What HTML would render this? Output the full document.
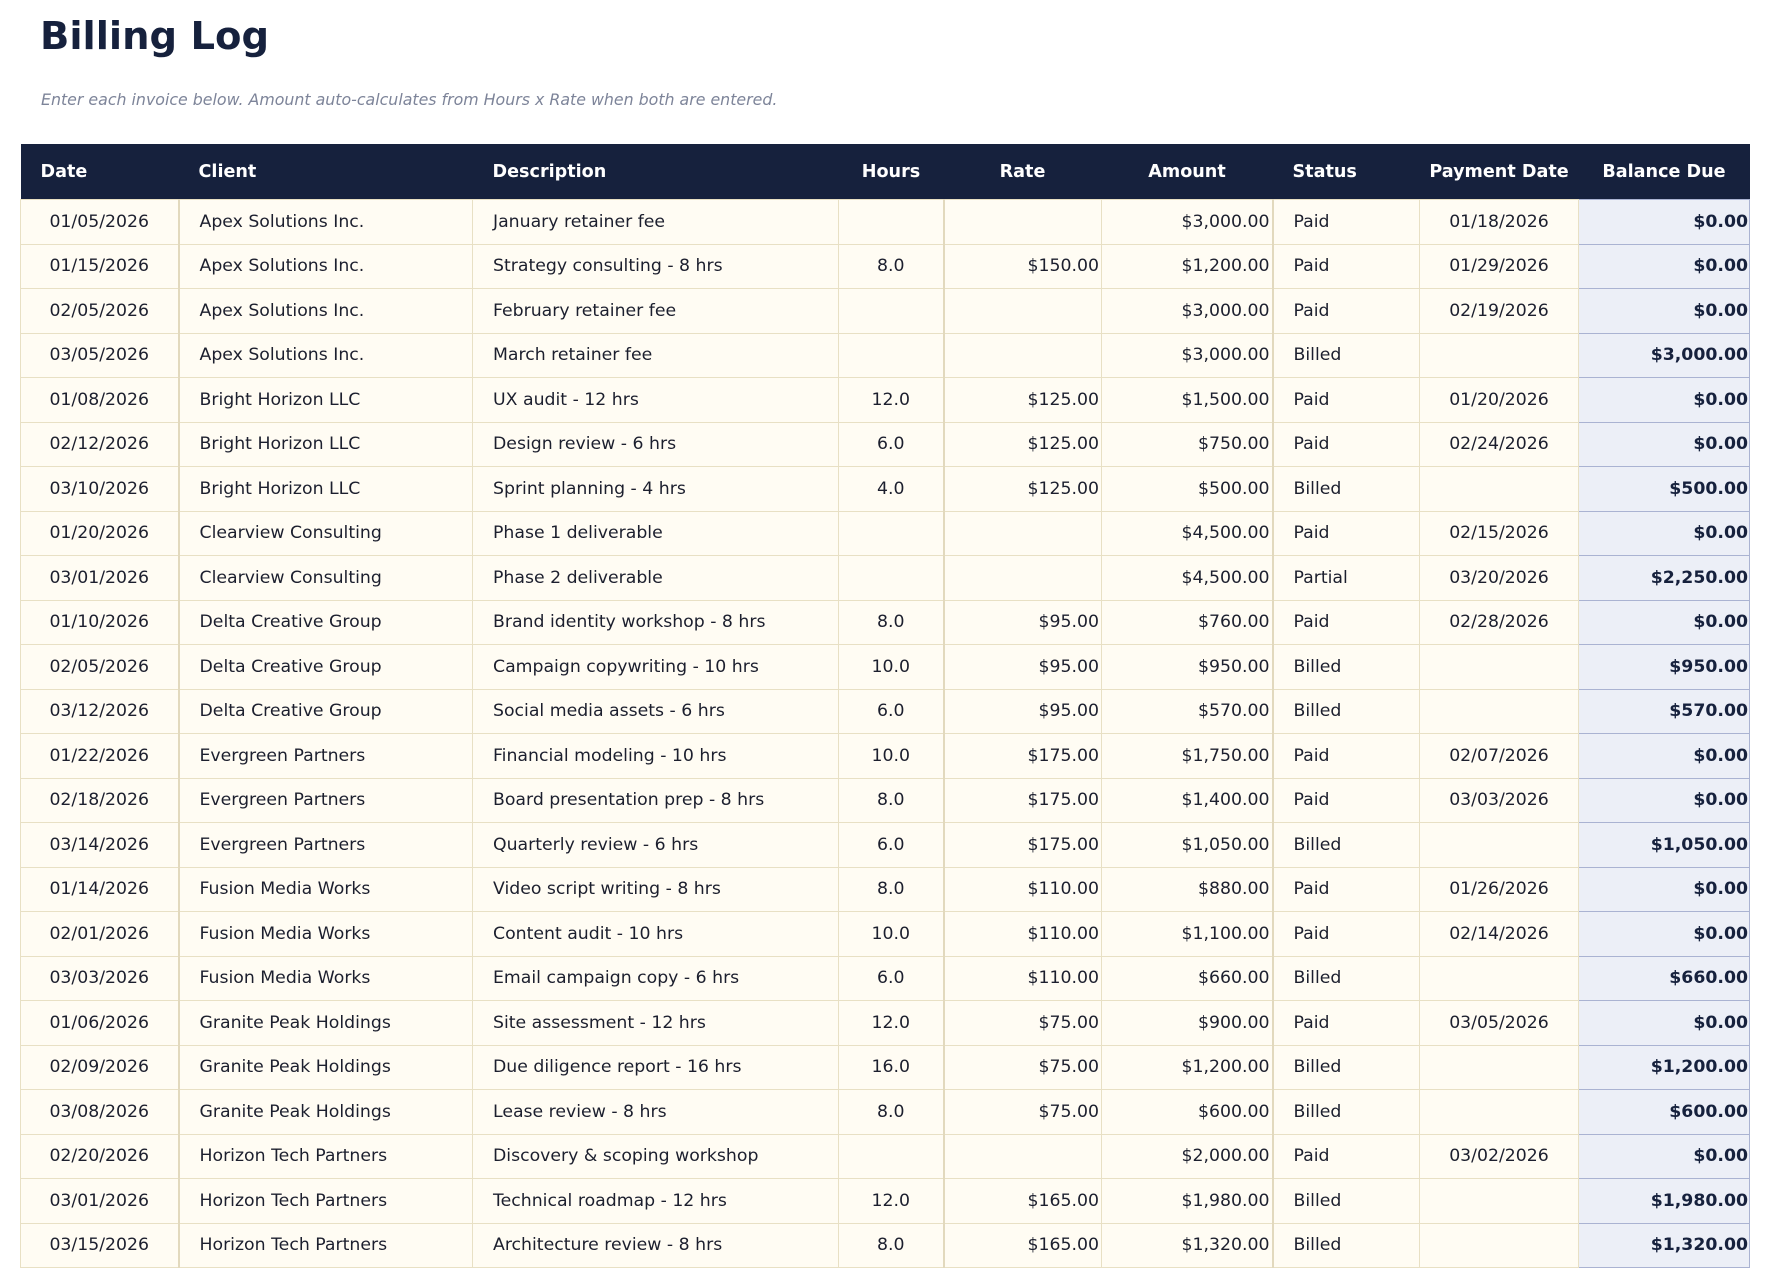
<!DOCTYPE html>
<html><head><meta charset="utf-8"><style>
html,body{margin:0;padding:0;background:#fff;width:1770px;height:1288px;overflow:hidden;font-family:"DejaVu Sans","Liberation Sans",sans-serif;}
h1{position:absolute;left:40px;top:14px;margin:0;font-size:38.5px;font-weight:bold;color:#16213d;}
.sub{position:absolute;left:41px;top:90px;font-size:15.8px;font-style:italic;color:#7d8499;}
table{position:absolute;left:20px;top:144px;border-collapse:collapse;table-layout:fixed;width:1729px;}
th{background:#16213d;color:#fff;font-weight:bold;font-size:17.6px;height:55px;padding:0;text-align:center;}
td{background:#fffcf3;border:1px solid #e8e0c4;height:43.5px;padding:0;font-size:17.3px;color:#1c1f2e;white-space:nowrap;}
.l{text-align:left;padding-left:20px;}
.c{text-align:center;}
.r{text-align:right;padding-right:2px;}
td.b{background:#eceff7;border:1px solid #aab3d2;font-weight:bold;text-align:right;padding-right:1px;color:#16213d;}
td.k{border-right:2px solid #e2d9bd;}
</style></head><body>
<h1>Billing Log</h1>
<div class="sub">Enter each invoice below. Amount auto-calculates from Hours x Rate when both are entered.</div>
<table>
<colgroup><col style="width:158px"><col style="width:294px"><col style="width:366px"><col style="width:105px"><col style="width:158px"><col style="width:171px"><col style="width:147px"><col style="width:159px"><col style="width:171px"></colgroup>
<tr><th class="l">Date</th><th class="l">Client</th><th class="l">Description</th><th>Hours</th><th>Rate</th><th>Amount</th><th class="l">Status</th><th>Payment Date</th><th>Balance Due</th></tr>
<tr><td class="c k">01/05/2026</td><td class="l">Apex Solutions Inc.</td><td class="l">January retainer fee</td><td class="c k"></td><td class="r"></td><td class="r k">$3,000.00</td><td class="l">Paid</td><td class="c">01/18/2026</td><td class="b">$0.00</td></tr>
<tr><td class="c k">01/15/2026</td><td class="l">Apex Solutions Inc.</td><td class="l">Strategy consulting - 8 hrs</td><td class="c k">8.0</td><td class="r">$150.00</td><td class="r k">$1,200.00</td><td class="l">Paid</td><td class="c">01/29/2026</td><td class="b">$0.00</td></tr>
<tr><td class="c k">02/05/2026</td><td class="l">Apex Solutions Inc.</td><td class="l">February retainer fee</td><td class="c k"></td><td class="r"></td><td class="r k">$3,000.00</td><td class="l">Paid</td><td class="c">02/19/2026</td><td class="b">$0.00</td></tr>
<tr><td class="c k">03/05/2026</td><td class="l">Apex Solutions Inc.</td><td class="l">March retainer fee</td><td class="c k"></td><td class="r"></td><td class="r k">$3,000.00</td><td class="l">Billed</td><td class="c"></td><td class="b">$3,000.00</td></tr>
<tr><td class="c k">01/08/2026</td><td class="l">Bright Horizon LLC</td><td class="l">UX audit - 12 hrs</td><td class="c k">12.0</td><td class="r">$125.00</td><td class="r k">$1,500.00</td><td class="l">Paid</td><td class="c">01/20/2026</td><td class="b">$0.00</td></tr>
<tr><td class="c k">02/12/2026</td><td class="l">Bright Horizon LLC</td><td class="l">Design review - 6 hrs</td><td class="c k">6.0</td><td class="r">$125.00</td><td class="r k">$750.00</td><td class="l">Paid</td><td class="c">02/24/2026</td><td class="b">$0.00</td></tr>
<tr><td class="c k">03/10/2026</td><td class="l">Bright Horizon LLC</td><td class="l">Sprint planning - 4 hrs</td><td class="c k">4.0</td><td class="r">$125.00</td><td class="r k">$500.00</td><td class="l">Billed</td><td class="c"></td><td class="b">$500.00</td></tr>
<tr><td class="c k">01/20/2026</td><td class="l">Clearview Consulting</td><td class="l">Phase 1 deliverable</td><td class="c k"></td><td class="r"></td><td class="r k">$4,500.00</td><td class="l">Paid</td><td class="c">02/15/2026</td><td class="b">$0.00</td></tr>
<tr><td class="c k">03/01/2026</td><td class="l">Clearview Consulting</td><td class="l">Phase 2 deliverable</td><td class="c k"></td><td class="r"></td><td class="r k">$4,500.00</td><td class="l">Partial</td><td class="c">03/20/2026</td><td class="b">$2,250.00</td></tr>
<tr><td class="c k">01/10/2026</td><td class="l">Delta Creative Group</td><td class="l">Brand identity workshop - 8 hrs</td><td class="c k">8.0</td><td class="r">$95.00</td><td class="r k">$760.00</td><td class="l">Paid</td><td class="c">02/28/2026</td><td class="b">$0.00</td></tr>
<tr><td class="c k">02/05/2026</td><td class="l">Delta Creative Group</td><td class="l">Campaign copywriting - 10 hrs</td><td class="c k">10.0</td><td class="r">$95.00</td><td class="r k">$950.00</td><td class="l">Billed</td><td class="c"></td><td class="b">$950.00</td></tr>
<tr><td class="c k">03/12/2026</td><td class="l">Delta Creative Group</td><td class="l">Social media assets - 6 hrs</td><td class="c k">6.0</td><td class="r">$95.00</td><td class="r k">$570.00</td><td class="l">Billed</td><td class="c"></td><td class="b">$570.00</td></tr>
<tr><td class="c k">01/22/2026</td><td class="l">Evergreen Partners</td><td class="l">Financial modeling - 10 hrs</td><td class="c k">10.0</td><td class="r">$175.00</td><td class="r k">$1,750.00</td><td class="l">Paid</td><td class="c">02/07/2026</td><td class="b">$0.00</td></tr>
<tr><td class="c k">02/18/2026</td><td class="l">Evergreen Partners</td><td class="l">Board presentation prep - 8 hrs</td><td class="c k">8.0</td><td class="r">$175.00</td><td class="r k">$1,400.00</td><td class="l">Paid</td><td class="c">03/03/2026</td><td class="b">$0.00</td></tr>
<tr><td class="c k">03/14/2026</td><td class="l">Evergreen Partners</td><td class="l">Quarterly review - 6 hrs</td><td class="c k">6.0</td><td class="r">$175.00</td><td class="r k">$1,050.00</td><td class="l">Billed</td><td class="c"></td><td class="b">$1,050.00</td></tr>
<tr><td class="c k">01/14/2026</td><td class="l">Fusion Media Works</td><td class="l">Video script writing - 8 hrs</td><td class="c k">8.0</td><td class="r">$110.00</td><td class="r k">$880.00</td><td class="l">Paid</td><td class="c">01/26/2026</td><td class="b">$0.00</td></tr>
<tr><td class="c k">02/01/2026</td><td class="l">Fusion Media Works</td><td class="l">Content audit - 10 hrs</td><td class="c k">10.0</td><td class="r">$110.00</td><td class="r k">$1,100.00</td><td class="l">Paid</td><td class="c">02/14/2026</td><td class="b">$0.00</td></tr>
<tr><td class="c k">03/03/2026</td><td class="l">Fusion Media Works</td><td class="l">Email campaign copy - 6 hrs</td><td class="c k">6.0</td><td class="r">$110.00</td><td class="r k">$660.00</td><td class="l">Billed</td><td class="c"></td><td class="b">$660.00</td></tr>
<tr><td class="c k">01/06/2026</td><td class="l">Granite Peak Holdings</td><td class="l">Site assessment - 12 hrs</td><td class="c k">12.0</td><td class="r">$75.00</td><td class="r k">$900.00</td><td class="l">Paid</td><td class="c">03/05/2026</td><td class="b">$0.00</td></tr>
<tr><td class="c k">02/09/2026</td><td class="l">Granite Peak Holdings</td><td class="l">Due diligence report - 16 hrs</td><td class="c k">16.0</td><td class="r">$75.00</td><td class="r k">$1,200.00</td><td class="l">Billed</td><td class="c"></td><td class="b">$1,200.00</td></tr>
<tr><td class="c k">03/08/2026</td><td class="l">Granite Peak Holdings</td><td class="l">Lease review - 8 hrs</td><td class="c k">8.0</td><td class="r">$75.00</td><td class="r k">$600.00</td><td class="l">Billed</td><td class="c"></td><td class="b">$600.00</td></tr>
<tr><td class="c k">02/20/2026</td><td class="l">Horizon Tech Partners</td><td class="l">Discovery &amp; scoping workshop</td><td class="c k"></td><td class="r"></td><td class="r k">$2,000.00</td><td class="l">Paid</td><td class="c">03/02/2026</td><td class="b">$0.00</td></tr>
<tr><td class="c k">03/01/2026</td><td class="l">Horizon Tech Partners</td><td class="l">Technical roadmap - 12 hrs</td><td class="c k">12.0</td><td class="r">$165.00</td><td class="r k">$1,980.00</td><td class="l">Billed</td><td class="c"></td><td class="b">$1,980.00</td></tr>
<tr><td class="c k">03/15/2026</td><td class="l">Horizon Tech Partners</td><td class="l">Architecture review - 8 hrs</td><td class="c k">8.0</td><td class="r">$165.00</td><td class="r k">$1,320.00</td><td class="l">Billed</td><td class="c"></td><td class="b">$1,320.00</td></tr>
</table>
</body></html>
